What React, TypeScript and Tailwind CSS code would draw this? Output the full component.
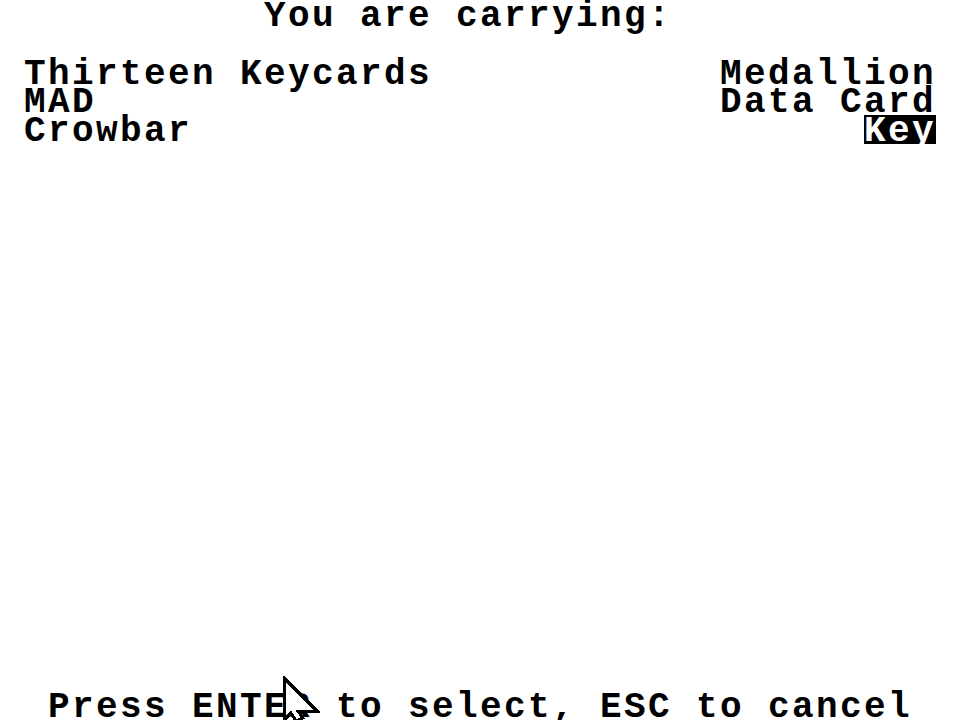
import React from 'react';

const leftItems = ['Thirteen Keycards', 'MAD', 'Crowbar'];
const rightItems = ['Medallion', 'Data Card', 'Key'];
const selected = 'Key';

function Cursor() {
  return (
    <svg
      className="absolute left-[282px] top-[676px]"
      width="38"
      height="46"
      viewBox="0 0 38 46"
      shapeRendering="crispEdges"
    >
      <path
        d="M2 2 L2 44 L9 37 L14 45 L21 42 L16 35 L35 35 Z"
        fill="white"
        stroke="black"
        strokeWidth="3"
      />
    </svg>
  );
}

export default function App() {
  return (
    <div className="relative w-[960px] h-[720px] bg-white text-black overflow-hidden font-['Liberation_Mono',monospace] font-bold text-[36px] tracking-[2.4px] leading-[28.8px] whitespace-pre">
      <div className="flex flex-col h-full">
        <div className="h-[28.8px] pt-[3px] pl-[264px]">You are carrying:</div>
        <div className="h-[28.8px]" />
        <div className="flex justify-between pl-[24px] pr-[24px]">
          <div className="flex flex-col">
            {leftItems.map((item) => (
              <div key={item} className="h-[28.8px] pt-[3px]">{item}</div>
            ))}
          </div>
          <div className="flex flex-col items-end">
            {rightItems.map((item) => (
              <div
                key={item}
                className={
                  item === selected
                    ? 'h-[28.8px] pt-[3px] bg-black text-white'
                    : 'h-[28.8px] pt-[3px]'
                }
              >
                {item}
              </div>
            ))}
          </div>
        </div>
        <div className="flex-1" />
        <div className="h-[28.8px] pt-[3px] pl-[48px]">Press ENTER to select, ESC to cancel</div>
      </div>
      <Cursor />
    </div>
  );
}
